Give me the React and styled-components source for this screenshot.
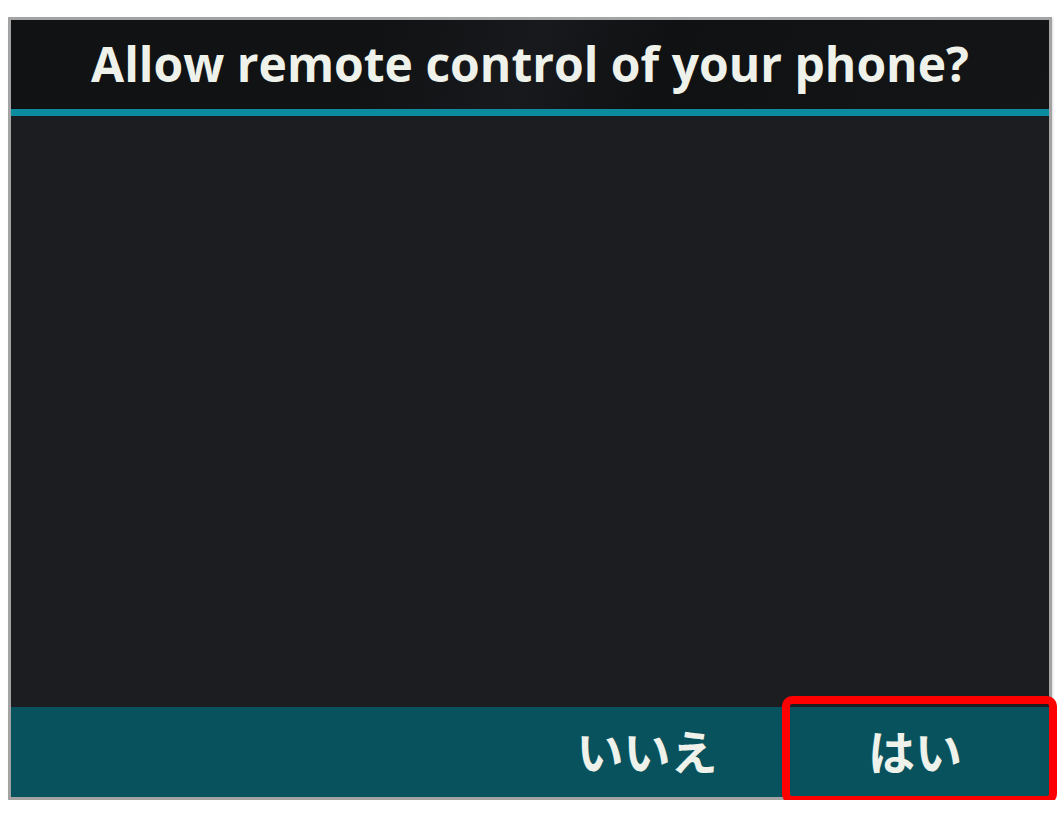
import React from "react";
import styled, { createGlobalStyle } from "styled-components";

const GlobalStyle = createGlobalStyle`
  html, body {
    margin: 0;
    padding: 0;
    background: #ffffff;
  }
  body {
    font-family: "Open Sans", "Noto Sans CJK JP", sans-serif;
  }
`;

const Page = styled.div`
  padding: 17px 0 0 8px;
`;

const Frame = styled.div`
  width: 1038px;
  height: 777px;
  border: 3px solid #a3a3a3;
  box-shadow: 1px 1px 2px rgba(0, 0, 0, 0.15);
  display: flex;
  flex-direction: column;
  background: #1b1d21;
`;

const Header = styled.div`
  height: 89px;
  display: flex;
  align-items: center;
  justify-content: center;
  background: linear-gradient(110deg, #101214 0%, #101214 35%, #17191c 50%, #0f1113 62%, #141517 100%);
  border-bottom: 7px solid #0a8c9e;
`;

const Title = styled.h1`
  margin: 0;
  padding-bottom: 3px;
  font-family: "Open Sans", sans-serif;
  font-weight: 700;
  font-size: 48px;
  color: #eef2ea;
`;

const Body = styled.div`
  flex: 1;
  background: #1b1d21;
`;

const ButtonBar = styled.div`
  height: 90px;
  display: flex;
  justify-content: flex-end;
  background: #08525e;
`;

const Button = styled.div`
  position: relative;
  width: 268px;
  display: flex;
  align-items: center;
  justify-content: center;
  font-family: "Noto Sans CJK JP", sans-serif;
  font-weight: 700;
  font-size: 47px;
  color: #eef2ea;
  padding-bottom: 6px;
  box-sizing: border-box;
`;

const Highlight = styled.div`
  position: absolute;
  top: -11px;
  bottom: -7px;
  left: 1px;
  right: -8px;
  border: 8px solid #ff0000;
  border-radius: 10px;
  pointer-events: none;
`;

export default function App() {
  return (
    <Page>
      <GlobalStyle />
      <Frame>
        <Header>
          <Title>Allow remote control of your phone?</Title>
        </Header>
        <Body />
        <ButtonBar>
          <Button>いいえ</Button>
          <Button>
            はい
            <Highlight />
          </Button>
        </ButtonBar>
      </Frame>
    </Page>
  );
}
